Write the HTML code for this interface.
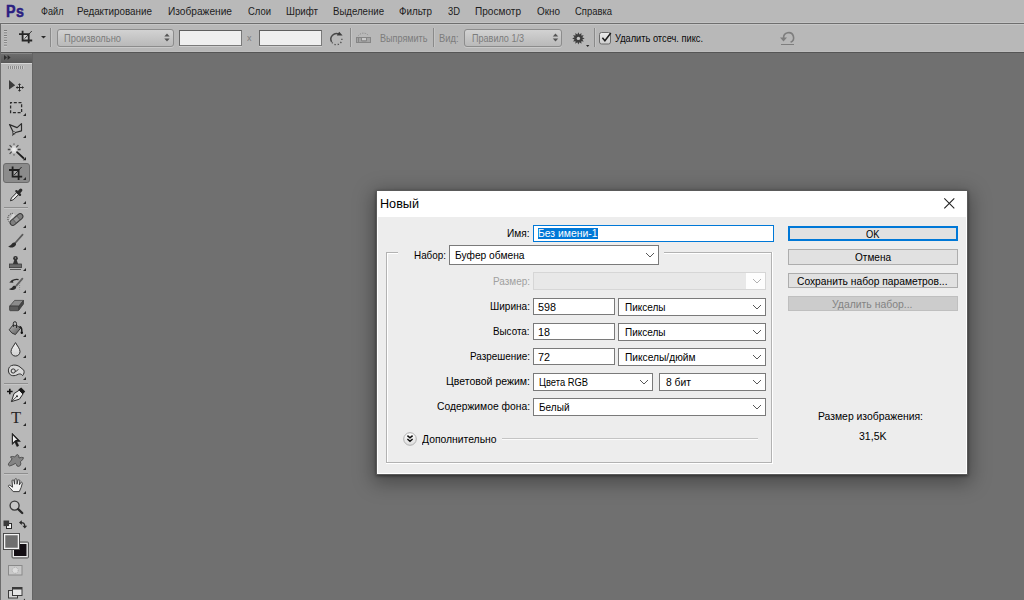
<!DOCTYPE html>
<html lang="ru"><head><meta charset="utf-8"><title>Adobe Photoshop</title>
<style>
*{box-sizing:border-box;margin:0;padding:0}
html,body{width:1024px;height:600px;overflow:hidden}
body{background:#707070;font-family:"Liberation Sans","DejaVu Sans",sans-serif;position:relative}
.a{position:absolute}
.t{position:absolute;transform-origin:0 50%;white-space:nowrap;line-height:16px;height:16px;font-family:"Liberation Sans","DejaVu Sans",sans-serif}
#menubar{left:0;top:0;width:1024px;height:23px;background:#b9b9b9;border-bottom:1px solid #c3c3c3}
#menuline{left:0;top:23px;width:1024px;height:1px;background:#6e6e6e}
#optbar{left:0;top:24px;width:1024px;height:28px;background:#b8b8b8;border-top:1px solid #c6c6c6;border-bottom:1px solid #bdbdbd}
#optline{left:0;top:52px;width:1024px;height:1px;background:#555}
#tools{left:0;top:53px;width:33px;height:547px;background:#b8b8b8;border-left:1px solid #6c6c6c;border-right:1px solid #646464}
#lcol{left:0;top:24px;width:1px;height:29px;background:#6c6c6c}
.optdd{height:18px;border:1px solid #8c8c8c;border-radius:3px;background:linear-gradient(#d2d2d2,#b9b9b9);box-shadow:0 1px 0 rgba(255,255,255,.25)}
.optin{height:16px;background:#efefef;border:1px solid #7a7a7a;border-top-color:#5e5e5e;border-left-color:#666;box-shadow:0 1px 0 rgba(255,255,255,.3)}
.sep{width:1px;background:#8a8a8a;box-shadow:1px 0 0 rgba(255,255,255,.18)}
#dlg{left:376px;top:190px;width:592px;height:285px;background:#fff;border:1px solid #5a5a5a;box-shadow:0 5px 18px 3px rgba(0,0,0,.34),0 1px 3px rgba(0,0,0,.45)}
#dlgbody{left:378px;top:217px;width:588px;height:256px;background:#ededed}
#dlgtitle{left:377px;top:191px;width:590px;height:26px;background:#fff}
.inp{background:#fff;border:1px solid #7a7a7a}
.sel{background:#fff;border:1px solid #7a7a7a}
.btn{background:#e1e1e1;border:1px solid #adadad}

</style></head><body>
<div id="menubar" class="a"></div><div id="menuline" class="a"></div>
<div id="optbar" class="a"></div><div id="optline" class="a"></div>
<div id="tools" class="a"></div><div id="lcol" class="a"></div>
<span class="t" style="left:6.200px;top:1px;height:22px;line-height:22px;font-size:16.800px;font-weight:bold;color:#2b2181;-webkit-text-stroke:.5px #2b2181;transform-origin:0 50%;transform:scaleX(.85);letter-spacing:.6px">Ps</span>
<div class="a optdd" style="left:57px;top:29px;width:117px"></div>
<div class="a optin" style="left:179px;top:30px;width:63px"></div>
<div class="a optin" style="left:259px;top:30px;width:63px"></div>
<div class="a optdd" style="left:464px;top:29px;width:98px"></div>
<div class="a sep" style="left:50px;top:28px;height:19px"></div>
<div class="a sep" style="left:350px;top:28px;height:19px"></div>
<div class="a sep" style="left:433px;top:28px;height:19px"></div>
<div class="a sep" style="left:594px;top:28px;height:19px"></div>
<svg class="a" style="left:0;top:24px" width="1024" height="28" viewBox="0 24 1024 28"><defs><linearGradient id="cbg" x1="0" y1="0" x2="0" y2="1"><stop offset="0" stop-color="#ebebeb"/><stop offset="1" stop-color="#cdcdcd"/></linearGradient></defs>
<rect x="4" y="30.00" width="3" height="1.100" fill="#7c7c7c"/><rect x="4" y="31.10" width="3" height="1" fill="#cdcdcd"/><rect x="4" y="32.45" width="3" height="1.100" fill="#7c7c7c"/><rect x="4" y="33.55" width="3" height="1" fill="#cdcdcd"/><rect x="4" y="34.90" width="3" height="1.100" fill="#7c7c7c"/><rect x="4" y="36.00" width="3" height="1" fill="#cdcdcd"/><rect x="4" y="37.35" width="3" height="1.100" fill="#7c7c7c"/><rect x="4" y="38.45" width="3" height="1" fill="#cdcdcd"/><rect x="4" y="39.80" width="3" height="1.100" fill="#7c7c7c"/><rect x="4" y="40.90" width="3" height="1" fill="#cdcdcd"/><rect x="4" y="42.25" width="3" height="1.100" fill="#7c7c7c"/><rect x="4" y="43.35" width="3" height="1" fill="#cdcdcd"/><rect x="4" y="44.70" width="3" height="1.100" fill="#7c7c7c"/><rect x="4" y="45.80" width="3" height="1" fill="#cdcdcd"/>
<rect x="23.400" y="35" width="4.600" height="4.800" fill="#cfcfcf"/><g id="cropopt" stroke="#262626" stroke-width="1.800" fill="none"><path d="M19 34.200H28.700V43.200M22.600 30.800V40.500H32.200"/><path d="M31.800 31L24.600 38.600" stroke-width=".9"/></g>
<path d="M41 36h5l-2.5 2.6z" fill="#2a2a2a"/>
<g fill="#555"><path d="M164.3 36.6h5.4L167 33.6z"/><path d="M164.3 38.6h5.4L167 41.6z"/><path d="M552.8 36.6h5.4L555.5 33.6z"/><path d="M552.8 38.6h5.4L555.5 41.6z"/></g>
<path d="M331.64 41.95A5.5 5.5 0 0 1 339.15 34.44" fill="none" stroke="#484848" stroke-width="1.500"/><path d="M341.88 38.72A5.5 5.5 0 0 1 331.64 41.95" fill="none" stroke="#555" stroke-width="1.400" stroke-dasharray="1.300 1.900"/><path d="M336.800 35.400L339.200 31.700L342.600 35.600z" fill="#3c3c3c"/>
<rect x="356.500" y="37.500" width="14" height="5" fill="#a4a4a4"/><rect x="362" y="38.200" width="4" height="1.600" fill="#d2d2d2"/><g fill="none" stroke="#868686" stroke-width="1"><rect x="356.5" y="37.5" width="14" height="5"/><path d="M361.500 37.500v3.500h5v-3.500M358.500 38v4"/><path d="M358.5 35.5A6.5 6.5 0 0 1 368.5 35.5" stroke-dasharray="1 1.2"/></g>
<path d="M578.40 32.20L579.44 34.54L581.50 33.03L581.23 35.57L583.77 35.30L582.26 37.36L584.60 38.40L582.26 39.44L583.77 41.50L581.23 41.23L581.50 43.77L579.44 42.26L578.40 44.60L577.36 42.26L575.30 43.77L575.57 41.23L573.03 41.50L574.54 39.44L572.20 38.40L574.54 37.36L573.03 35.30L575.57 35.57L575.30 33.03L577.36 34.54z" fill="#3e3e3e"/><circle cx="578.4" cy="38.4" r="1.700" fill="#c4c4c4"/>
<path d="M586 45h3.4l-1.7 1.9z" fill="#2a2a2a"/>
<rect x="599.500" y="32.500" width="11" height="11.500" fill="url(#cbg)" stroke="#6c6c6c" rx="2"/>
<path d="M602.400 37.800l2.500 2.900 5.900-7.700" fill="none" stroke="#1c1c1c" stroke-width="1.500"/>
<g fill="none" stroke="#7e7e7e"><path d="M783.600 38A5 5 0 1 1 790.600 42.300" stroke-width="1.600"/><path d="M781 44.500h13" stroke-width="1"/></g>
<path d="M780 37.400h7l-3.500 4.200z" fill="#7e7e7e"/>
</svg><svg class="a" style="left:0;top:53px" width="40" height="547" viewBox="0 53 40 547">
<defs><linearGradient id="hg" x1="0" y1="0" x2="0" y2="1"><stop offset="0" stop-color="#6f6f6f"/><stop offset="1" stop-color="#5a5a5a"/></linearGradient><linearGradient id="lg" x1="0" y1="0" x2="0" y2="1"><stop offset="0" stop-color="#f4f4f4"/><stop offset="1" stop-color="#cfcfcf"/></linearGradient></defs>
<rect x="1" y="53" width="31" height="10" fill="url(#hg)"/><rect x="1" y="53" width="31" height="1" fill="#868686"/><rect x="1" y="62" width="31" height="1" fill="#585858"/><rect x="1" y="63" width="31" height="1" fill="#d6d6d6"/>
<path d="M4 55l3 2.5-3 2.5zM7.6 55l3 2.5-3 2.5z" fill="#2b2b2b"/>
<rect x="8" y="66" width="1" height="3" fill="#8c8c8c"/><rect x="9" y="66" width="1" height="3" fill="#c9c9c9"/><rect x="10" y="66" width="1" height="3" fill="#8c8c8c"/><rect x="11" y="66" width="1" height="3" fill="#c9c9c9"/><rect x="12" y="66" width="1" height="3" fill="#8c8c8c"/><rect x="13" y="66" width="1" height="3" fill="#c9c9c9"/><rect x="14" y="66" width="1" height="3" fill="#8c8c8c"/><rect x="15" y="66" width="1" height="3" fill="#c9c9c9"/><rect x="16" y="66" width="1" height="3" fill="#8c8c8c"/><rect x="17" y="66" width="1" height="3" fill="#c9c9c9"/><rect x="18" y="66" width="1" height="3" fill="#8c8c8c"/><rect x="19" y="66" width="1" height="3" fill="#c9c9c9"/><rect x="20" y="66" width="1" height="3" fill="#8c8c8c"/><rect x="21" y="66" width="1" height="3" fill="#c9c9c9"/><rect x="22" y="66" width="1" height="3" fill="#8c8c8c"/><rect x="23" y="66" width="1" height="3" fill="#c9c9c9"/>
<g fill="#2a2a2a"><path d="M26 113v3h-3z"/><path d="M26 135v3h-3z"/><path d="M26 201v3h-3z"/><path d="M26 225v3h-3z"/><path d="M26 247v3h-3z"/><path d="M26 268v3h-3z"/><path d="M26 290v3h-3z"/><path d="M26 311v3h-3z"/><path d="M26 334v3h-3z"/><path d="M26 355v3h-3z"/><path d="M26 377v3h-3z"/><path d="M26 401v3h-3z"/><path d="M26 423v3h-3z"/><path d="M26 445v3h-3z"/><path d="M26 467v3h-3z"/><path d="M26 491v3h-3z"/></g>
<rect x="3.5" y="163.5" width="26" height="19" rx="2.5" fill="#8b8b8b" stroke="#6b6b6b"/>
<path d="M26 177v3h-3z" fill="#2a2a2a"/>
<rect x="4" y="207" width="24" height="1" fill="#8e8e8e"/><rect x="4" y="208" width="24" height="1" fill="#c6c6c6"/>
<rect x="4" y="383" width="24" height="1" fill="#8e8e8e"/><rect x="4" y="384" width="24" height="1" fill="#c6c6c6"/>
<rect x="4" y="473" width="24" height="1" fill="#8e8e8e"/><rect x="4" y="474" width="24" height="1" fill="#c6c6c6"/>
<path d="M9 80v9.4l6.2-4.2z" fill="#3a3a3a"/>
<g stroke="#2c2c2c" stroke-width="1" fill="#2c2c2c"><path d="M16.5 87.5h7M19.5 84v7" fill="none"/><path d="M19.5 83.3l1.6 1.8h-3.2zM19.5 91.7l1.6-1.8h-3.2zM15.8 87.5l1.8-1.6v3.2zM23.8 87.5l-1.8-1.6v3.2z" stroke="none"/></g>
<rect x="10.6" y="102.6" width="11" height="10" fill="none" stroke="#2c2c2c" stroke-width="1.3" stroke-dasharray="3 1.7" stroke-dashoffset="1.5"/>
<path d="M9.5 124.6l7.6 3 4.4-4v7.2l-7.8 2.2z" fill="none" stroke="#2c2c2c" stroke-width="1.2" stroke-linejoin="round"/>
<path d="M12.2 136.2l.6-4.4 3 2.2-1.8.4z" fill="#2c2c2c"/><circle cx="14" cy="132.6" r="1.1" fill="#ddd" stroke="#2c2c2c" stroke-width=".7"/>
<circle cx="14" cy="149.500" r="3.600" fill="#d9d9d9"/><circle cx="14" cy="149.500" r="1.800" fill="#ebebeb"/>
<g stroke="#484848" stroke-width="1.200"><path d="M11.800 147.300l-2.200-2.200M16.200 147.300l2.200-2.200M11.800 151.700l-2.200 2.200"/><path d="M10.400 149.500h-2.600M17.600 149.500h3" stroke-width="1.300"/><path d="M14 144.800v-1.200M14 154.200v1.200" stroke-width="1.100"/></g>
<path d="M17 152.200l6.400 5.800" stroke="#1e1e1e" stroke-width="1.800" stroke-linecap="round"/><path d="M26 157v3.200h-3.200z" fill="#1e1e1e"/>
<rect x="13.400" y="170.800" width="4.400" height="4.800" fill="#a6a6a6"/>
<g stroke="#1f1f1f" stroke-width="1.8" fill="none"><path d="M12.6 166.4v10.2h9.6M9 170h9.6v10"/><path d="M21.6 167l-7.4 8" stroke-width=".9"/></g>
<path d="M10.4 200.8l1-2.8 6.4-6.6 2 2-6.6 6.4z" fill="#ededed" stroke="#2c2c2c" stroke-width="1" stroke-linejoin="round"/>
<path d="M16.4 191.2l3.6 3.6" stroke="#2c2c2c" stroke-width="2.4" stroke-linecap="round"/><path d="M18.6 192.6l2.2-2.4" stroke="#2c2c2c" stroke-width="3.2" stroke-linecap="round"/>
<path d="M9.4 222A5 5 0 0 1 13 213.4" fill="none" stroke="#333" stroke-width="1" stroke-dasharray="1.2 1"/>
<path d="M8.6 221.5l4.4-8 2 1.6-3.4 6.6z" fill="#d6d6d6"/>
<g transform="rotate(-40 16.5 219.5)"><rect x="9" y="216.7" width="15" height="5.6" rx="2.8" fill="#7e7e7e" stroke="#3a3a3a" stroke-width="1"/><rect x="14" y="217.2" width="5" height="4.6" fill="#959595" stroke="#4a4a4a" stroke-width=".6"/></g>
<path d="M22.6 234.6l-7.2 8.2" stroke="#5a5a5a" stroke-width="1.7" stroke-linecap="round"/>
<path d="M8.2 246.2c2.4-.4 3.2-1.6 4.4-3.2 1.2-1 2.8-.6 3.4.6.4 1.6-1 3.4-3.4 3.8-1.8.2-3.4 0-4.400-1.2z" fill="#2c2c2c"/>
<circle cx="15.500" cy="258.300" r="2.300" fill="#333"/><circle cx="15.500" cy="258" r=".7" fill="#999"/><path d="M14.300 260h2.400l1.400 4h-5.200z" fill="#333"/>
<rect x="9.5" y="264" width="12" height="3.6" fill="#6b6b6b" stroke="#3c3c3c" stroke-width=".8"/><rect x="10" y="269" width="11" height="1" fill="#5a5a5a"/>
<path d="M22.400 278.600l-6 7" stroke="#606060" stroke-width="1.800" stroke-linecap="round"/>
<path d="M9 289c2.200-.3 3-1.300 4-2.700 1.200-.9 2.700-.5 3.100.5.400 1.400-.8 3-3.100 3.200-1.600.200-3 0-4-1z" fill="#2c2c2c"/>
<path d="M11.800 281.200q3-2.600 6.800-1.500" fill="none" stroke="#2c2c2c" stroke-width="1.200"/><path d="M9.200 282.600l3.400-3.200.8 3.400z" fill="#2c2c2c"/>
<path d="M19.600 283v6.500" stroke="#7c7c7c" stroke-width=".8" stroke-dasharray="1 1"/>
<path d="M9.800 306l4.800-5.600h8.800l-4.600 5.900z" fill="#8c8c8c" stroke="#444" stroke-width=".8" stroke-linejoin="round"/>
<path d="M9.600 306.100h9.100v3.800q0 .8-.8.800h-7.500q-.8 0-.8-.800z" fill="#5c5c5c" stroke="#3c3c3c" stroke-width=".8" stroke-linejoin="round"/><path d="M18.800 306.300l4.700-5.900v3.600l-4.700 6.200z" fill="#474747" stroke="#3c3c3c" stroke-width=".8" stroke-linejoin="round"/>
<defs><linearGradient id="bk" x1="0" y1="0" x2="1" y2="1"><stop offset="0" stop-color="#b4b4b4"/><stop offset="1" stop-color="#565656"/></linearGradient></defs>
<path d="M9.200 329.800l3.600-4.600q4.600-.6 7.800 3l-5.200 6.400q-4-.8-6.200-4.800z" fill="url(#bk)" stroke="#303030" stroke-width=".9" stroke-linejoin="round"/>
<path d="M13.300 327v-3.600a1.600 1.700 0 0 1 3.200 0v4.600" fill="none" stroke="#2c2c2c" stroke-width="1"/>
<path d="M19.400 326.600q2.600.6 2.400 4.600" fill="none" stroke="#1c1c1c" stroke-width="1.500"/><ellipse cx="21.800" cy="332.600" rx="1.200" ry="1.500" fill="#111"/>
<path d="M15.500 342.600c-1.800 3.400-4.500 6-4.500 9a4.500 4.500 0 0 0 9 0c0-3-2.700-5.600-4.500-9z" fill="url(#lg)" stroke="#2f2f2f" stroke-width="1"/>
<path d="M9 373c-1.200-2.600-.6-6 2.400-7.400 3-1.200 6.400-.4 8.600 1.400l3.800 3.200c.6 1.400.4 3.800-1.200 5.400-1.200-1.600-2.600-2-4.200-1.400-2 1-3.800 1.800-6 1.400-1.600-.2-2.800-1.200-3.400-2.600z" fill="#d8d8d8" stroke="#2f2f2f" stroke-width="1" stroke-linejoin="round"/>
<circle cx="13.200" cy="371" r="2.100" fill="none" stroke="#2f2f2f" stroke-width="1"/><path d="M15.200 371.400c1.600-.2 2.600-1 3-2.200" fill="none" stroke="#2f2f2f" stroke-width=".9"/>
<path d="M7 391.500h5.600M9.800 388.700v5.600" stroke="#111" stroke-width="1.600"/>
<path d="M11.400 401.600l2.600-8 5.200-3.400 3.800 3.800-3.600 5.200z" fill="#e9e9e9" stroke="#2a2a2a" stroke-width="1" stroke-linejoin="round"/>
<path d="M18.400 389.600l2.800-2.200 4 4-2.400 2.800z" fill="#161616"/><path d="M11.600 401.400l5-4.800" stroke="#2a2a2a" stroke-width=".8"/><circle cx="17" cy="396.200" r="1" fill="#2a2a2a"/>
<text x="10.900" y="423.200" font-family="'Liberation Serif',serif" font-size="16.600" fill="#262626">T</text>
<path d="M12.200 433.200v11.400l2.700-2.500 2 4.400 1.800-.8-2-4.300h3.700z" fill="#1a1a1a" stroke="#1a1a1a" stroke-width=".6" stroke-linejoin="round"/>
<path d="M13 435.600v6.800l2-1.800.8-.6h1.400z" fill="#f4f4f4"/>
<path d="M17.600 454.600Q19.200 455 19 458Q21.500 456.800 23.400 457.600Q23.800 459.400 20.400 461.600Q21.400 464 20.200 465.600Q18.600 467 17 466Q16.400 464 15.400 463.400Q12 465.400 9.600 466Q7.600 465.400 8.600 463.400Q11 461 12.200 458.600Q10.400 458 10.600 456.800Q12.600 456 14.800 457Q15.800 455 17.600 454.600Z" fill="#848484" stroke="#4c4c4c" stroke-width=".9" stroke-linejoin="round"/>
<path d="M13.200 491.600c-1.600-2-3.200-3.800-4.800-5.200-.4-1 .8-1.600 1.800-1l2.400 1.800-.6-6.400c.2-1.200 1.800-1.200 2 0l.6 3.400.2-4.600c.2-1.200 2-1.200 2.100 0l.1 4.600.9-3.800c.4-1.100 1.900-.8 1.900.3l-.4 4.200 1.200-2.200c.6-.9 1.900-.4 1.700.6-.6 3-1.600 5.600-3 8.300z" fill="#f3f3f3" stroke="#2f2f2f" stroke-width=".9" stroke-linejoin="round"/>
<circle cx="14.600" cy="505.600" r="4.500" fill="#c6c6c6" stroke="#3a3a3a" stroke-width="1.400"/><path d="M18.200 509.200l4 3.800" stroke="#2a2a2a" stroke-width="2.300" stroke-linecap="round"/>
<rect x="6.500" y="523.500" width="5" height="5" fill="#f4f4f4" stroke="#2a2a2a" stroke-width="1"/><rect x="3.500" y="520.500" width="5.600" height="5.600" fill="#3c3c3c"/>
<path d="M20.400 522.600c3-.4 4.400 1 4.400 4" fill="none" stroke="#2a2a2a" stroke-width="1.300"/><path d="M19 522.600l2.800-2.400v4.800zM24.800 528.600l-2.400-2.800h4.800z" fill="#2a2a2a"/>
<rect x="12" y="542" width="16.500" height="16" rx="1" fill="#b8b8b8" stroke="#555" stroke-width="1"/><rect x="13.500" y="543.500" width="13.500" height="13" fill="#120d12" stroke="#e8e8e8" stroke-width="1"/>
<rect x="3.500" y="533.500" width="16" height="16" fill="#6e6e6e" stroke="#444" stroke-width="1"/><rect x="4.600" y="534.600" width="13.800" height="13.800" fill="#6e6e6e" stroke="#f4f4f4" stroke-width="1.300"/>
<rect x="8.500" y="565.500" width="13.500" height="9.500" fill="#c8c8c8" stroke="#8a8a8a" stroke-width="1"/><circle cx="15.200" cy="570.300" r="3" fill="#dcdcdc" stroke="#a0a0a0" stroke-width=".8" stroke-dasharray="1 .8"/>
<rect x="8.500" y="590.500" width="9" height="7.500" fill="#d8d8d8" stroke="#3a3a3a" stroke-width="1"/><rect x="12.500" y="587.500" width="9.500" height="8" fill="#e6e6e6" stroke="#3a3a3a" stroke-width="1"/><rect x="12.500" y="587.500" width="9.500" height="2" fill="#3a3a3a"/><path d="M25 598.500v1.500h-1.500z" fill="#2a2a2a"/>
</svg><div id="dlg" class="a"></div><div id="dlgtitle" class="a"></div><div id="dlgbody" class="a"></div>
<svg class="a" style="left:940px;top:194px" width="20" height="20" viewBox="940 194 20 20"><path d="M944.300 198.300l10 10M954.300 198.300l-10 10" stroke="#222" stroke-width="1.100"/></svg>
<div class="a" style="left:386px;top:252px;width:1px;height:212px;background:#b2b2b2;"></div>
<div class="a" style="left:387px;top:253px;width:1px;height:210px;background:#fff;"></div>
<div class="a" style="left:386px;top:252px;width:12px;height:1px;background:#b2b2b2;"></div>
<div class="a" style="left:387px;top:253px;width:11px;height:1px;background:#fff;"></div>
<div class="a" style="left:664px;top:252px;width:109px;height:1px;background:#b2b2b2;"></div>
<div class="a" style="left:664px;top:253px;width:108px;height:1px;background:#fff;"></div>
<div class="a" style="left:772px;top:252px;width:1px;height:212px;background:#fff;"></div>
<div class="a" style="left:771px;top:253px;width:1px;height:210px;background:#b2b2b2;"></div>
<div class="a" style="left:386px;top:463px;width:387px;height:1px;background:#fff;"></div>
<div class="a" style="left:387px;top:462px;width:385px;height:1px;background:#b2b2b2;"></div>
<div class="a" style="left:533px;top:225px;width:241px;height:17px;background:#fff;border:1px solid #0078d7"></div>
<div class="a" style="left:538px;top:228px;width:60px;height:11px;background:#0078d7"></div>
<div class="a sel" style="left:449px;top:245px;width:210px;height:20px"></div>
<svg class="a" style="left:644px;top:251.0px" width="12" height="8" viewBox="-6 -4 12 8"><path d="M-4 -2L0 2L4 -2" fill="none" stroke="#585858" stroke-width="1"/></svg>
<div class="a" style="left:533px;top:272px;width:233px;height:18px;background:#e8e8e8;border:1px solid #d6d6d6"></div>
<div class="a" style="left:746px;top:273px;width:19px;height:16px;background:#fdfdfd"></div>
<svg class="a" style="left:751px;top:277.0px" width="12" height="8" viewBox="-6 -4 12 8"><path d="M-4 -2L0 2L4 -2" fill="none" stroke="#b0b0b0" stroke-width="1"/></svg>
<div class="a inp" style="left:533px;top:298px;width:82px;height:17px"></div>
<div class="a sel" style="left:618px;top:298px;width:148px;height:18px"></div>
<svg class="a" style="left:751px;top:303.0px" width="12" height="8" viewBox="-6 -4 12 8"><path d="M-4 -2L0 2L4 -2" fill="none" stroke="#585858" stroke-width="1"/></svg>
<div class="a inp" style="left:533px;top:323px;width:82px;height:17px"></div>
<div class="a sel" style="left:618px;top:323px;width:148px;height:18px"></div>
<svg class="a" style="left:751px;top:328.0px" width="12" height="8" viewBox="-6 -4 12 8"><path d="M-4 -2L0 2L4 -2" fill="none" stroke="#585858" stroke-width="1"/></svg>
<div class="a inp" style="left:533px;top:348px;width:82px;height:17px"></div>
<div class="a sel" style="left:618px;top:348px;width:148px;height:18px"></div>
<svg class="a" style="left:751px;top:353.0px" width="12" height="8" viewBox="-6 -4 12 8"><path d="M-4 -2L0 2L4 -2" fill="none" stroke="#585858" stroke-width="1"/></svg>
<div class="a sel" style="left:533px;top:373px;width:120px;height:18px"></div>
<svg class="a" style="left:638px;top:378.0px" width="12" height="8" viewBox="-6 -4 12 8"><path d="M-4 -2L0 2L4 -2" fill="none" stroke="#585858" stroke-width="1"/></svg>
<div class="a sel" style="left:659px;top:373px;width:107px;height:18px"></div>
<svg class="a" style="left:751px;top:378.0px" width="12" height="8" viewBox="-6 -4 12 8"><path d="M-4 -2L0 2L4 -2" fill="none" stroke="#585858" stroke-width="1"/></svg>
<div class="a sel" style="left:533px;top:398px;width:233px;height:18px"></div>
<svg class="a" style="left:751px;top:403.0px" width="12" height="8" viewBox="-6 -4 12 8"><path d="M-4 -2L0 2L4 -2" fill="none" stroke="#585858" stroke-width="1"/></svg>
<svg class="a" style="left:402px;top:431px" width="16" height="16" viewBox="402 431 16 16"><defs><linearGradient id="cg" x1="0" y1="0" x2="0" y2="1"><stop offset="0" stop-color="#ffffff"/><stop offset="1" stop-color="#dcdcdc"/></linearGradient></defs><circle cx="410" cy="439" r="6.300" fill="url(#cg)" stroke="#b0b0b0" stroke-width="1"/><path d="M407.400 435.600l2.600 2.200 2.600-2.200M407.400 439l2.600 2.200 2.600-2.200" fill="none" stroke="#111" stroke-width="1.500"/></svg>
<div class="a" style="left:502px;top:438px;width:256px;height:1px;background:#c4c4c4;"></div>
<div class="a" style="left:502px;top:439px;width:256px;height:1px;background:#fbfbfb;"></div>
<div class="a" style="left:788px;top:226px;width:170px;height:15px;background:#e1e1e1;border:2px solid #0078d7"></div>
<div class="a btn" style="left:788px;top:249px;width:170px;height:16px"></div>
<div class="a btn" style="left:788px;top:273px;width:170px;height:15px"></div>
<div class="a" style="left:788px;top:296px;width:170px;height:15px;background:#cccccc;border:1px solid #bfbfbf"></div>
<!-- text layer -->
<span class="t" style="left:40.50px;top:3.36px;font-size:10.5px;color:#1c1c1c;transform:scaleX(0.8711);">Файл</span>
<span class="t" style="left:77.00px;top:3.36px;font-size:10.5px;color:#1c1c1c;transform:scaleX(0.9375);">Редактирование</span>
<span class="t" style="left:168.00px;top:3.36px;font-size:10.5px;color:#1c1c1c;transform:scaleX(0.9674);">Изображение</span>
<span class="t" style="left:248.00px;top:3.36px;font-size:10.5px;color:#1c1c1c;transform:scaleX(0.9003);">Слои</span>
<span class="t" style="left:286.00px;top:3.36px;font-size:10.5px;color:#1c1c1c;transform:scaleX(0.9263);">Шрифт</span>
<span class="t" style="left:333.00px;top:3.36px;font-size:10.5px;color:#1c1c1c;transform:scaleX(0.9166);">Выделение</span>
<span class="t" style="left:399.00px;top:3.36px;font-size:10.5px;color:#1c1c1c;transform:scaleX(0.9353);">Фильтр</span>
<span class="t" style="left:448.00px;top:3.36px;font-size:10.5px;color:#1c1c1c;transform:scaleX(0.8930);">3D</span>
<span class="t" style="left:475.00px;top:3.36px;font-size:10.5px;color:#1c1c1c;transform:scaleX(0.9593);">Просмотр</span>
<span class="t" style="left:537.00px;top:3.36px;font-size:10.5px;color:#1c1c1c;transform:scaleX(0.9424);">Окно</span>
<span class="t" style="left:575.00px;top:3.36px;font-size:10.5px;color:#1c1c1c;transform:scaleX(0.8980);">Справка</span>
<span class="t" style="left:64.00px;top:29.86px;font-size:10.5px;color:#7c7c7c;transform:scaleX(0.8876);">Произвольно</span>
<span class="t" style="left:247.00px;top:29.71px;font-size:9.5px;color:#7c7c7c;transform:scaleX(0.9474);">x</span>
<span class="t" style="left:379.50px;top:29.86px;font-size:10.5px;color:#7c7c7c;transform:scaleX(0.8634);">Выпрямить</span>
<span class="t" style="left:438.50px;top:29.86px;font-size:10.5px;color:#7c7c7c;transform:scaleX(0.8895);">Вид:</span>
<span class="t" style="left:472.00px;top:29.86px;font-size:10.5px;color:#7c7c7c;transform:scaleX(0.8626);">Правило 1/3</span>
<span class="t" style="left:615.00px;top:29.86px;font-size:10.5px;color:#0a0a0a;transform:scaleX(0.8819);">Удалить отсеч. пикс.</span>
<span class="t" style="left:380.00px;top:196.00px;font-size:13px;color:#000;transform:scaleX(0.9716);">Новый</span>
<span class="t" style="left:507.00px;top:225.19px;font-size:11px;color:#000;transform:scaleX(0.9190);">Имя:</span>
<span class="t" style="left:538.00px;top:225.19px;font-size:11px;color:#fff;transform:scaleX(0.9440);">Без имени-1</span>
<span class="t" style="left:413.50px;top:247.19px;font-size:11px;color:#000;transform:scaleX(0.8975);">Набор:</span>
<span class="t" style="left:455.00px;top:247.19px;font-size:11px;color:#000;transform:scaleX(0.9298);">Буфер обмена</span>
<span class="t" style="left:492.50px;top:273.19px;font-size:11px;color:#a0a0a0;transform:scaleX(0.9052);">Размер:</span>
<span class="t" style="left:489.50px;top:298.19px;font-size:11px;color:#000;transform:scaleX(0.9143);">Ширина:</span>
<span class="t" style="left:538.00px;top:298.79px;font-size:11px;color:#000;transform:scaleX(0.9804);">598</span>
<span class="t" style="left:624.50px;top:298.79px;font-size:11px;color:#000;transform:scaleX(0.9085);">Пикселы</span>
<span class="t" style="left:493.00px;top:323.19px;font-size:11px;color:#000;transform:scaleX(0.8936);">Высота:</span>
<span class="t" style="left:538.00px;top:323.79px;font-size:11px;color:#000;transform:scaleX(0.9796);">18</span>
<span class="t" style="left:624.50px;top:323.79px;font-size:11px;color:#000;transform:scaleX(0.9085);">Пикселы</span>
<span class="t" style="left:469.50px;top:348.19px;font-size:11px;color:#000;transform:scaleX(0.9010);">Разрешение:</span>
<span class="t" style="left:538.00px;top:348.79px;font-size:11px;color:#000;transform:scaleX(0.9796);">72</span>
<span class="t" style="left:624.50px;top:348.79px;font-size:11px;color:#000;transform:scaleX(0.9276);">Пикселы/дюйм</span>
<span class="t" style="left:445.50px;top:373.19px;font-size:11px;color:#000;transform:scaleX(0.9554);">Цветовой режим:</span>
<span class="t" style="left:539.00px;top:373.79px;font-size:11px;color:#000;transform:scaleX(0.8515);">Цвета RGB</span>
<span class="t" style="left:665.50px;top:373.79px;font-size:11px;color:#000;transform:scaleX(0.9373);">8 бит</span>
<span class="t" style="left:436.50px;top:398.19px;font-size:11px;color:#000;transform:scaleX(0.9370);">Содержимое фона:</span>
<span class="t" style="left:539.00px;top:398.79px;font-size:11px;color:#000;transform:scaleX(0.9117);">Белый</span>
<span class="t" style="left:422.00px;top:431.19px;font-size:11px;color:#000;transform:scaleX(0.9410);">Дополнительно</span>
<span class="t" style="left:865.50px;top:225.69px;font-size:11px;color:#000;transform:scaleX(0.8487);">OK</span>
<span class="t" style="left:854.50px;top:249.19px;font-size:11px;color:#000;transform:scaleX(0.9121);">Отмена</span>
<span class="t" style="left:797.00px;top:272.69px;font-size:11px;color:#000;transform:scaleX(0.9323);">Сохранить набор параметров...</span>
<span class="t" style="left:831.50px;top:296.19px;font-size:11px;color:#838383;transform:scaleX(0.9476);">Удалить набор...</span>
<span class="t" style="left:817.50px;top:407.69px;font-size:11px;color:#000;transform:scaleX(0.9434);">Размер изображения:</span>
<span class="t" style="left:858.50px;top:427.69px;font-size:11px;color:#000;transform:scaleX(0.9565);">31,5K</span>
</body></html>
